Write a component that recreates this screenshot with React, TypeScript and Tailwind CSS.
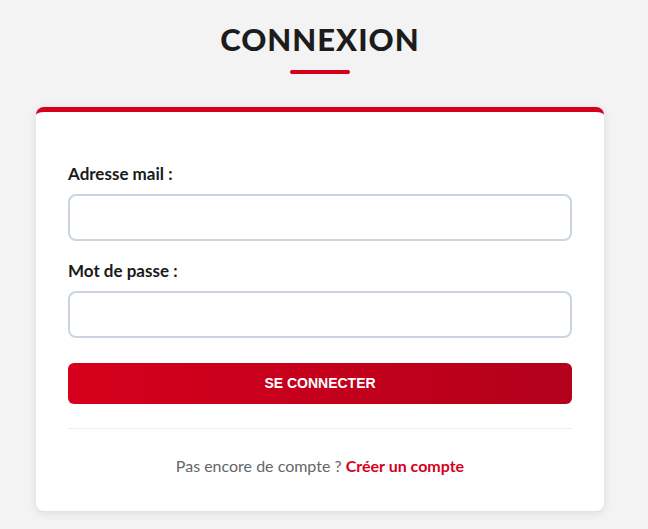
const Field = ({ label, type }: { label: string; type: string }) => {
  return (
    <div className="mb-5">
      <label className="mb-[10px] block text-[17px] font-bold leading-[20px] text-[#1a1a1a]">{label}</label>
      <input
        type={type}
        className="block h-[47px] w-full rounded-lg border-2 border-[#cbd5e1] bg-white px-3 outline-none"
      />
    </div>
  );
};

const App = () => {
  return (
    <div className="min-h-[529px] w-full bg-[#f3f3f3] pr-2 font-['Lato',sans-serif]">
      <div className="mx-auto flex w-[568px] flex-col items-center pt-[20px]">
        <h1 className="text-[31px] font-black leading-[38px] tracking-[1px] text-[#1c1c1c]">CONNEXION</h1>
        <div className="mt-[12px] h-1 w-[60px] rounded-full bg-[#d6001c]" />
        <div className="mt-[33px] w-full rounded-lg border-t-[5px] border-[#d6001c] bg-white px-8 pb-[34px] pt-[52px] shadow-[0_2px_10px_rgba(0,0,0,0.1)]">
          <Field label="Adresse mail :" type="email" />
          <Field label="Mot de passe :" type="password" />
          {/* margin collapses with the field's mb-5 */}
          <button className="mt-[25px] flex h-[41px] w-full items-center justify-center rounded-md bg-gradient-to-r from-[#d6001c] to-[#b3001b] font-['Liberation_Sans',sans-serif] text-[14px] font-bold text-white">
            SE CONNECTER
          </button>
          <div className="mt-6 border-t border-[#ececec]" />
          <p className="mt-[26px] text-center text-[16px] leading-[22px] text-[#666]">
            Pas encore de compte ? <a className="font-bold text-[#d6001c]">Créer un compte</a>
          </p>
        </div>
      </div>
    </div>
  );
};

export default App;
